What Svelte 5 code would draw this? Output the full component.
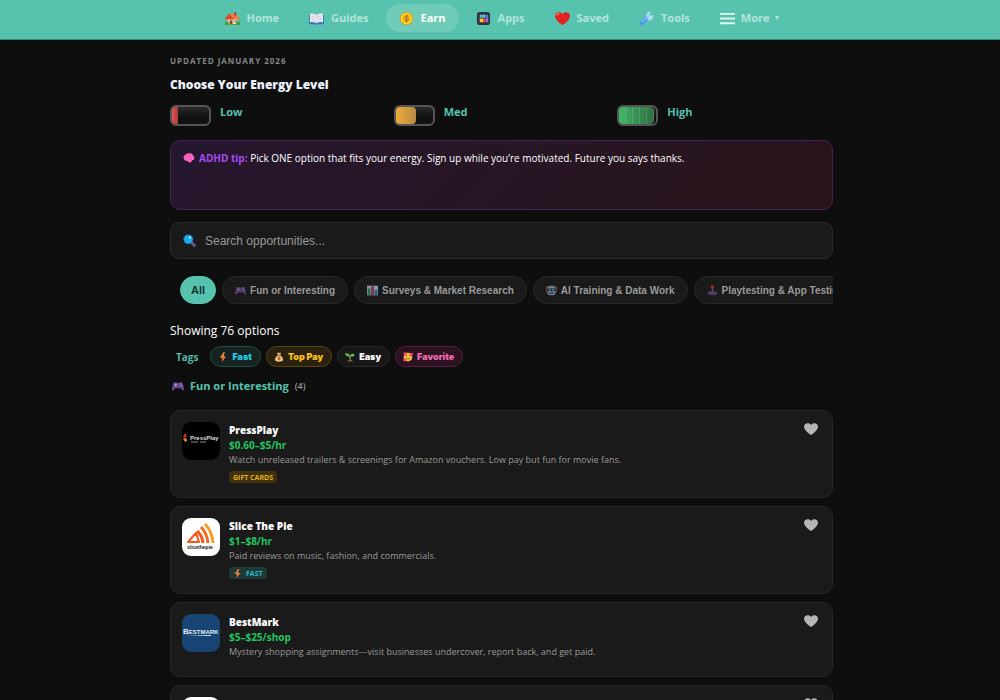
<script>
    const nav = [
        { icon: "home", label: "Home" },
        { icon: "book", label: "Guides" },
        { icon: "coin", label: "Earn" },
        { icon: "apps", label: "Apps" },
        { icon: "love", label: "Saved" },
        { icon: "wrench", label: "Tools" },
    ];
    const levels = [
        { name: "Low", cls: "low" },
        { name: "Med", cls: "med" },
        { name: "High", cls: "high" },
    ];
    const categories = [
        { icon: "game", label: "Fun or Interesting" },
        { icon: "chart", label: "Surveys & Market Research" },
        { icon: "robot", label: "AI Training & Data Work" },
        { icon: "joystick", label: "Playtesting & App Testing" },
    ];
    const tags = [
        { icon: "bolt", label: "Fast", cls: "fast" },
        { icon: "money", label: "Top Pay", cls: "top" },
        { icon: "plant", label: "Easy", cls: "easy" },
        { icon: "face", label: "Favorite", cls: "favorite" },
    ];
    const cards = [
        { logo: "pressplay", name: "PressPlay", pay: "$0.60–$5/hr", text: "Watch unreleased trailers & screenings for Amazon vouchers. Low pay but fun for movie fans.", badge: "Gift cards" },
        { logo: "slice", name: "Slice The Pie", pay: "$1–$8/hr", text: "Paid reviews on music, fashion, and commercials.", badge: "Fast" },
        { logo: "bestmark", name: "BestMark", pay: "$5–$25/shop", text: "Mystery shopping assignments—visit businesses undercover, report back, and get paid." },
        { logo: "plain", name: "L&E Research" },
    ];

    let page = $state("Earn");
    let category = $state("All");
    let search = $state("");
    let saved = $state([]);

    function toggleSaved(name) {
        saved = saved.includes(name) ? saved.filter((n) => n != name) : [...saved, name];
    }
</script>

{#snippet icon(name)}
    <svg class="icon" viewBox="0 0 16 16" aria-hidden="true">
        {#if name == "home"}
            <path d="M0 13h16v2H1z" fill="#5d9440" />
            <path d="M3 8h10v6H3z" fill="#f5d7a1" />
            <path d="M0 8l4-5 6 5v1H0z" fill="#d9492c" />
            <path d="M4 3h7l5 5v1h-6z" fill="#ef7a3b" />
            <path d="M10 1h2v4h-2z" fill="#a94032" />
            <path d="M5 10h3v4H5z" fill="#87452d" />
            <path d="M10 10h3v2h-3z" fill="#4fa6da" />
            <circle cx="2" cy="13" r="2" fill="#4a9b3b" />
            <circle cx="14" cy="13" r="2" fill="#4a9b3b" />
        {:else if name == "book"}
            <path d="M0 4h16v10H9l-1 1-1-1H0z" fill="#3978b9" />
            <path d="M1 3q4-1 7 1v9q-3-2-7-1zM15 3q-4-1-7 1v9q3-2 7-1z" fill="#e9e5f2" />
            <path d="M8 4v9M3 5.500h3M3 7.500h3M3 9.500h3M10 5.500h3M10 7.500h3M10 9.500h3" stroke="#cbc2da" stroke-width="0.700" fill="none" />
        {:else if name == "coin"}
            <circle cx="8" cy="8" r="7" fill="#d18a13" />
            <circle cx="8" cy="8" r="6.300" fill="#ffd52d" />
            <circle cx="8" cy="8" r="4.500" fill="#f1b51f" />
            <path d="M10 5.500H7q-2 1 0 2.500h2q2 1 0 2.500H6M8 4v8" stroke="#a8741a" fill="none" />
        {:else if name == "apps"}
            <rect x="1" y="1" width="14" height="14" rx="3" fill="#343241" />
            <path d="M4 4h3v3H4z" fill="#56b6f0" /><path d="M7 4h3v3H7z" fill="#60d6cf" /><path d="M10 4h3v4h-3z" fill="#3986df" />
            <path d="M4 8h4v4H4z" fill="#ffc62e" /><path d="M8 8h2v4H8z" fill="#ef5350" /><path d="M10.500 8H13v4h-2.500z" fill="#bb65df" />
        {:else if name == "love" || name == "heart"}
            <path d="M8 15C5 13 0 9 0 5.500 0 1 6 0 8 3.500 10 0 16 1 16 5.500 16 9 11 13 8 15z" fill={name == "love" ? "#e02322" : "#b5b5b5"} />
            {#if name == "love"}<path d="M2 5q0-3 3-2" stroke="#ff6b61" stroke-width="1.500" fill="none" />{/if}
        {:else if name == "wrench"}
            <path d="M3 13l6-6" stroke="#4f8ff0" stroke-width="4" stroke-linecap="round" />
            <path d="M8 6Q7 2 10 1q2-1 3 0l-2 2 1 2 3-1q1 3-1 5-3 2-5 0z" fill="#a9d9fc" />
            <path d="M3 12l7-7" stroke="#79c0ff" stroke-width="1.500" />
        {:else if name == "brain"}
            <path d="M1 8q-1-3 2-4 2-3 5-2 4-1 5 2 3 2 2 5 0 2-3 2 0 3-3 3-2 0-3-2-5 0-5-4z" fill="#ff67c3" />
            <path d="M4 5q3-1 3 2M8 3q0 3 3 2M3 9q3 1 4-1M10 8q3 0 3-2M8 11l3-1" stroke="#df4bac" stroke-width="0.800" fill="none" />
        {:else if name == "search"}
            <path d="M10 10l4 4" stroke="#655391" stroke-width="3.500" stroke-linecap="round" />
            <circle cx="6.500" cy="6.500" r="6" fill="#3c6fae" />
            <circle cx="6.500" cy="6.500" r="5" fill="#16adf0" />
            <circle cx="8.500" cy="4.500" r="1.300" fill="#cfefff" />
        {:else if name == "game"}
            <path d="M3 3h3l1 1h2l1-1h3q2 1 3 10-1 3-4-2H4Q1 16 0 13 1 4 3 3z" fill="#6c4a92" />
            <path d="M5 5v3M3.500 6.500h3" stroke="#c9bcdc" />
            <circle cx="11" cy="5.500" r="1" fill="#ef4c57" /><circle cx="12.500" cy="7.500" r="1" fill="#52b5ea" />
        {:else if name == "chart"}
            <path d="M0 1h16v14H0z" fill="#c2c8d4" />
            <path d="M1 5h4v10H1z" fill="#1b9b68" /><path d="M6 2h4v13H6z" fill="#b3315f" /><path d="M11 7h4v8h-4z" fill="#207eb5" />
        {:else if name == "robot"}
            <path d="M0 2h2v8H0zM14 2h2v8h-2z" fill="#e24b42" />
            <rect x="2" y="1" width="12" height="14" rx="4" fill="#8fa4b5" />
            <path d="M1 5h14v4H1z" fill="#263748" /><circle cx="5.500" cy="7" r="1.300" fill="#57d7f5" /><circle cx="10.500" cy="7" r="1.300" fill="#57d7f5" />
            <path d="M5 11h6v2H5z" fill="#354858" />
        {:else if name == "joystick"}
            <path d="M7 5h2v6H7z" fill="#777083" /><circle cx="8" cy="3" r="2.500" fill="#d93438" />
            <path d="M1 11l3-2h8l3 2v2q-7 4-14 0z" fill="#6a4a89" />
        {:else if name == "bolt"}
            <path d="M9 0L3 9h4l-1 7 7-9H9l2-7z" fill="#f88334" />
        {:else if name == "money"}
            <path d="M5 1h6l-1 4q6 4 4 9-6 3-12 0-2-5 4-9z" fill="#f0bd82" />
            <path d="M5 5h6" stroke="#9c633b" stroke-width="1.500" />
            <path d="M10 8H7q-2 1 0 2h2q2 1 0 2H6M8 7v6" stroke="#78502f" fill="none" />
        {:else if name == "plant"}
            <path d="M8 12V6" stroke="#78bb3e" stroke-width="2" />
            <path d="M8 7Q1 8 0 2q7-1 8 5zM8 7q0-5 7-4 1 5-7 4z" fill="#69bf43" />
            <path d="M3 15q5-6 10 0z" fill="#8b5848" />
        {:else if name == "face"}
            <circle cx="8" cy="8" r="7" fill="#ffbd38" />
            <circle cx="5.500" cy="6" r="1" fill="#65402e" /><circle cx="11" cy="6" r="1" fill="#65402e" />
            <path d="M5 10q3 3 6 0" stroke="#65402e" fill="none" />
            <path d="M2 0l2 1 2-1v3L3 6 0 3zM12 1l2 1 2-1v3l-3 3-2-4zM1 10l2 1 2-1v3l-2 3-3-3z" fill="#ec387d" />
        {:else if name == "menu"}
            <path d="M0 3h16M0 8h16M0 13h16" stroke="#e0f4ef" stroke-width="2" />
        {/if}
    </svg>
{/snippet}

{#snippet logo(name)}
    <svg class="logo" viewBox="0 0 38 38" aria-hidden="true">
        {#if name == "pressplay"}
            <rect width="38" height="38" fill="#000" />
            <path d="M3 11l2 3-2 2-2-1z" fill="#c4352a" />
            <path d="M1 17l2-1 2 1v2l-2 1z" fill="#c98526" />
            <text x="8" y="18" font-size="6" font-weight="bold" fill="#ddd">PressPlay</text>
            <path d="M9 20h7M18 20h6" stroke="#888" />
        {:else if name == "slice"}
            <rect width="38" height="38" fill="#fff" />
            <path d="M6 24l8-9 3 9z" fill="none" stroke="#f3591d" stroke-width="2" stroke-linejoin="round" />
            <path d="M15 13q5 4 6 12" fill="none" stroke="#f3591d" stroke-width="3" />
            <path d="M19 9q6 6 7 16" fill="none" stroke="#f56a21" stroke-width="3" />
            <path d="M23 6q7 7 8 19" fill="none" stroke="#f99d22" stroke-width="3" />
            <text x="5" y="31" font-size="5" font-weight="bold" fill="#222">slicethepie</text>
        {:else if name == "bestmark"}
            <rect width="38" height="38" fill="#164473" />
            <text x="1" y="20" font-size="8" font-weight="bold" fill="#e4edf6">B<tspan font-size="6">ESTMARK</tspan></text>
            <path d="M3 22l26-1v1z" fill="#dbe8f4" />
        {:else}
            <rect width="38" height="38" fill="#fff" />
        {/if}
    </svg>
{/snippet}

<header>
    <nav>
        {#each nav as item}
            <a href="#{item.label}" class:active={page == item.label} onclick={() => (page = item.label)}>
                {@render icon(item.icon)}<span>{item.label}</span>
            </a>
        {/each}
        <button class="more">{@render icon("menu")}<span>More</span><i></i></button>
    </nav>
</header>

<main>
    <p class="updated">Updated January 2026</p>
    <h1>Choose Your Energy Level</h1>
    <div class="levels">
        {#each levels as level}
            <button class="level">
                <span class="battery"><span class="charge {level.cls}"></span></span>
                <span>{level.name}</span>
            </button>
        {/each}
    </div>

    <div class="tip">
        {@render icon("brain")}
        <p><strong>ADHD tip:</strong> Pick ONE option that fits your energy. Sign up while you’re motivated. Future you says thanks.</p>
    </div>

    <label class="search">
        {@render icon("search")}
        <input type="text" aria-label="Search opportunities" placeholder="Search opportunities..." bind:value={search} />
    </label>

    <div class="categories">
        <button class:active={category == "All"} onclick={() => (category = "All")}>All</button>
        {#each categories as c}
            <button class:active={category == c.label} onclick={() => (category = c.label)}>
                {@render icon(c.icon)}{c.label}
            </button>
        {/each}
    </div>

    <p class="showing">Showing 76 options</p>
    <div class="tags">
        <span class="title">Tags</span>
        {#each tags as tag}
            <button class={tag.cls}>{@render icon(tag.icon)}{tag.label}</button>
        {/each}
    </div>

    <h2>{@render icon("game")}Fun or Interesting <small>(4)</small></h2>

    {#each cards as card}
        <article class:short={!card.badge}>
            {@render logo(card.logo)}
            <div class="info">
                <h3>{card.name}</h3>
                {#if card.pay}
                    <p class="pay">{card.pay}</p>
                    <p class="text">{card.text}</p>
                {/if}
                {#if card.badge}
                    <span class="badge" class:quick={card.badge == "Fast"}>
                        {#if card.badge == "Fast"}{@render icon("bolt")}{/if}{card.badge}
                    </span>
                {/if}
            </div>
            <button class="save" aria-label="Save {card.name}" aria-pressed={saved.includes(card.name)} onclick={() => toggleSaved(card.name)}>
                {@render icon("heart")}
            </button>
        </article>
    {/each}
</main>

<style>
:global(body) {
    background: #0e0e0e;
    color: #fff;
    font-family: "Open Sans", "Noto Sans", sans-serif;
}

p, h1, h2, h3 {
    margin: 0;
}

button {
    font-family: inherit;
    cursor: pointer;
}

.icon {
    width: 12px;
    height: 12px;
    flex: none;
}

header {
    height: 39px;
    background: #57c3ae;
    border-bottom: 1px solid #3f8779;
}

nav {
    display: flex;
    justify-content: center;
    gap: 4px;
    padding: 4px 0 0 4px;
}

nav a, .more {
    display: flex;
    align-items: center;
    gap: 7px;
    height: 28px;
    padding: 0 13px;
    border: 0;
    border-radius: 14px;
    background: none;
    color: #b3e3d9;
    font-size: 11px;
    font-weight: 700;
    line-height: 16px;
    text-decoration: none;
}

nav .icon {
    width: 15px;
    height: 15px;
}

nav a.active {
    background: #70cbb9;
    color: #fff;
}

.more {
    gap: 6px;
}

.more i {
    border: 2px solid transparent;
    border-top: 4px solid #b3e3d9;
    border-bottom: 0;
}

main {
    max-width: 663px;
    margin: 0 auto;
    padding: 15px 0 20px 3px;
}

.updated {
    color: #858585;
    font-size: 8px;
    font-weight: 700;
    line-height: 12px;
    letter-spacing: 1px;
    text-transform: uppercase;
}

h1 {
    margin-top: 8px;
    color: #eef2ff;
    font-size: 12px;
    font-weight: 800;
    line-height: 20px;
}

.levels {
    display: grid;
    grid-template-columns: repeat(3, 1fr);
    gap: 8px;
    margin-top: 8px;
}

.level {
    display: flex;
    gap: 9px;
    padding: 0;
    border: 0;
    background: none;
    color: #56c2ad;
    font-size: 11px;
    font-weight: 700;
    line-height: 18px;
    text-align: left;
}

.battery {
    box-sizing: border-box;
    width: 41px;
    height: 21px;
    margin-top: 2px;
    border: 2px solid #555;
    border-radius: 6px;
    background: linear-gradient(#292929, #111 60%);
}

.charge {
    display: block;
    height: 17px;
    border-radius: 4px;
}

.low {
    width: 6px;
    border-radius: 4px 0 0 4px;
    background: linear-gradient(90deg, #e35555, #a93b3b);
}

.med {
    width: 20px;
    background: linear-gradient(90deg, #f0ad3b, #b58a42);
}

.high {
    width: 35px;
    background: repeating-linear-gradient(90deg, transparent 0 6px, #ffffff22 6px 7px), linear-gradient(90deg, #43b566, #2e6f43);
}

.tip {
    display: flex;
    gap: 4px;
    min-height: 44px;
    margin-top: 14px;
    padding: 8px 12px 16px;
    border: 1px solid #452052;
    border-radius: 10px;
    background: linear-gradient(135deg, #25172f, #281419);
    font-size: 10px;
    line-height: 18px;
}

.tip .icon {
    margin-top: 3px;
}

.tip strong {
    color: #a64bf0;
}

.search {
    display: flex;
    align-items: center;
    gap: 9px;
    height: 35px;
    margin-top: 12px;
    padding: 0 12px;
    border: 1px solid #2a2a2a;
    border-radius: 9px;
    background: #1a1a1a;
}

.search .icon {
    width: 13px;
    height: 13px;
}

.search input {
    flex: 1;
    min-width: 0;
    padding: 0;
    border: 0;
    outline: 0;
    background: none;
    color: #fff;
    font-family: "Liberation Sans", Arial, sans-serif;
    font-size: 12px;
}

.search input::placeholder {
    color: #999;
}

.categories {
    display: flex;
    gap: 6px;
    margin-top: 17px;
    padding-left: 10px;
    overflow: hidden;
}

.categories button {
    display: flex;
    flex: none;
    align-items: center;
    gap: 4px;
    height: 28px;
    padding: 0 12px;
    border: 1px solid #282828;
    border-radius: 14px;
    background: #1a1a1a;
    color: #999;
    font-family: "Liberation Sans", Arial, sans-serif;
    font-size: 10px;
    font-weight: 700;
}

.categories .icon {
    width: 11px;
    height: 11px;
    opacity: 0.7;
}

.categories button.active {
    padding: 0 10px;
    border-color: #57c3ae;
    background: #57c3ae;
    color: #12352e;
    font-size: 11px;
}

.showing {
    margin-top: 17px;
    font-size: 12px;
    line-height: 20px;
}

.tags {
    display: flex;
    align-items: center;
    gap: 5px;
    margin-top: 5px;
    padding-left: 6px;
}

.tags .title {
    margin-right: 7px;
    color: #56b8a5;
    font-size: 10px;
    font-weight: 700;
}

.tags button {
    display: flex;
    align-items: center;
    gap: 4px;
    height: 21px;
    padding: 0 8px 0 7px;
    border: 1px solid #282828;
    border-radius: 11px;
    background: #171717;
    color: #fff;
    font-family: Inter, sans-serif;
    font-size: 9px;
    font-weight: 900;
}

.tags .icon {
    width: 10px;
    height: 10px;
}

.tags .fast {
    border-color: #214b45;
    background: #162321;
    color: #22cde8;
}

.tags .top {
    border-color: #58430d;
    background: #2a210e;
    color: #fcc21c;
}

.tags .favorite {
    border-color: #591d3f;
    background: #2a1220;
    color: #ee69b0;
}

h2 {
    display: flex;
    align-items: center;
    gap: 6px;
    margin: 9px 0 14px 2px;
    color: #56c2ad;
    font-size: 11px;
    line-height: 20px;
}

h2 small {
    color: #999;
    font-size: 9px;
    font-weight: 600;
}

article {
    display: flex;
    gap: 9px;
    box-sizing: border-box;
    min-height: 88px;
    margin-bottom: 8px;
    padding: 11px;
    border: 1px solid #262626;
    border-radius: 10px;
    background: #1a1a1a;
}

article.short {
    min-height: 75px;
}

.logo {
    flex: none;
    width: 38px;
    height: 38px;
    border-radius: 9px;
    font-family: "Liberation Sans", Arial, sans-serif;
}

.info {
    flex: 1;
}

h3 {
    font-size: 10px;
    font-weight: 800;
    line-height: 16px;
}

.pay {
    color: #22c55e;
    font-size: 10px;
    font-weight: 700;
    line-height: 15px;
}

.text {
    color: #999;
    font-size: 9px;
    line-height: 14px;
}

.badge {
    display: flex;
    align-items: center;
    gap: 4px;
    width: fit-content;
    height: 12px;
    margin-top: 4px;
    padding: 0 4px;
    border-radius: 4px;
    background: #41320f;
    color: #e2ae20;
    font-size: 7px;
    font-weight: 700;
    text-transform: uppercase;
}

.badge.quick {
    background: #203936;
    color: #22b8cf;
}

.badge .icon {
    width: 9px;
    height: 9px;
}

.save {
    align-self: flex-start;
    display: flex;
    padding: 0 3px;
    border: 0;
    background: none;
}

.save .icon {
    width: 14px;
    height: 14px;
}
</style>
